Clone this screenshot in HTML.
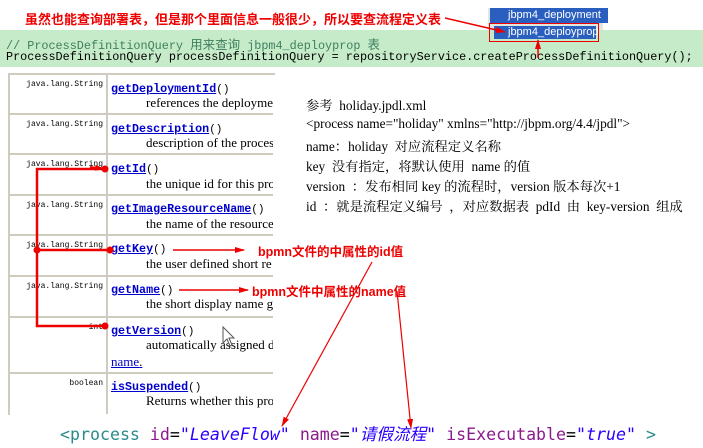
<!DOCTYPE html>
<html><head><meta charset="utf-8"><style>
body{margin:0;width:703px;height:448px;background:#fff;position:relative;overflow:hidden;font-family:"Liberation Serif","Noto Serif CJK SC",serif}
.a{position:absolute;white-space:nowrap}
.mono{font-family:"Liberation Mono","Noto Sans CJK SC",monospace}
.t{font-size:8px;font-family:"Liberation Mono",monospace;color:#000;text-align:right;width:92px}
.m{font-family:"Liberation Mono",monospace;font-weight:bold;font-size:11.7px;color:#00c;text-decoration:underline}
.d{font-size:13px;color:#000}
.r{color:#e00;font-weight:bold;font-family:"Liberation Sans","Noto Sans CJK SC",sans-serif}
.rt{font-size:13.3px;color:#000;font-family:"Liberation Serif","Noto Serif CJK SC",serif}
</style></head><body>
<div class="a" style="left:488px;top:8px;width:115px;height:32px;background:#dfe7e0"></div>
<div class="a" style="left:0;top:30px;width:703px;height:37px;background:#c6ebc9"></div>
<div class="a" style="left:490px;top:8px;width:100px;height:15px;background:#2a5fc0;color:#fff;font:11px 'Liberation Sans',sans-serif;padding-left:18px;line-height:15px">jbpm4_deployment</div>
<div class="a" style="left:494px;top:26px;width:88px;height:13px;background:#2a5fc0;color:#fff;font:11px 'Liberation Sans',sans-serif;padding-left:14px;line-height:13px">jbpm4_deployprop</div>
<div class="a" style="left:489px;top:23px;width:108px;height:17px;border:1px solid #e00"></div>
<div class="a r" style="left:25px;top:9px;font-size:13px">虽然也能查询部署表，但是那个里面信息一般很少，所以要查流程定义表</div>
<div class="a mono" style="left:6px;top:34px;font-size:11.8px;color:#3f7f5f">// ProcessDefinitionQuery <span style="font-family:'Noto Sans CJK SC',sans-serif;font-size:12.5px">用来查询</span> jbpm4_deployprop <span style="font-family:'Noto Sans CJK SC',sans-serif;font-size:12.5px">表</span></div>
<div class="a mono" style="left:6px;top:50px;font-size:11.8px;color:#000">ProcessDefinitionQuery processDefinitionQuery = repositoryService.createProcessDefinitionQuery();</div>

<div class="a" style="left:8px;top:73px;width:265px;height:340px;border-left:2px solid #cfcbbf;border-top:2px solid #cfcbbf"></div>
<div class="a" style="left:106px;top:74px;width:2px;height:340px;background:#cfcbbf"></div>
<div class="a" style="left:10px;top:113px;width:263px;height:2px;background:#cfcbbf"></div>
<div class="a" style="left:10px;top:153px;width:263px;height:2px;background:#cfcbbf"></div>
<div class="a" style="left:10px;top:194px;width:263px;height:2px;background:#cfcbbf"></div>
<div class="a" style="left:10px;top:234px;width:263px;height:2px;background:#cfcbbf"></div>
<div class="a" style="left:10px;top:275px;width:263px;height:2px;background:#cfcbbf"></div>
<div class="a" style="left:10px;top:316px;width:263px;height:2px;background:#cfcbbf"></div>
<div class="a" style="left:10px;top:372px;width:263px;height:2px;background:#cfcbbf"></div>

<div class="a t" style="left:11px;top:80px">java.lang.String</div>
<div class="a t" style="left:11px;top:120px">java.lang.String</div>
<div class="a t" style="left:11px;top:160px">java.lang.String</div>
<div class="a t" style="left:11px;top:201px">java.lang.String</div>
<div class="a t" style="left:11px;top:241px">java.lang.String</div>
<div class="a t" style="left:11px;top:282px">java.lang.String</div>
<div class="a t" style="left:11px;top:323px">int</div>
<div class="a t" style="left:11px;top:379px">boolean</div>

<div style="position:absolute;left:111px;top:74px;width:162px;height:340px;overflow:hidden">
<div class="a" style="left:0;top:5px"><span class="m">getDeploymentId</span><span class="mono" style="font-size:11px">()</span></div>
<div class="a d" style="left:35px;top:21px">references the deployment</div>
<div class="a" style="left:0;top:45px"><span class="m">getDescription</span><span class="mono" style="font-size:11px">()</span></div>
<div class="a d" style="left:35px;top:61px">description of the process</div>
<div class="a" style="left:0;top:85px"><span class="m">getId</span><span class="mono" style="font-size:11px">()</span></div>
<div class="a d" style="left:35px;top:102px">the unique id for this process</div>
<div class="a" style="left:0;top:125px"><span class="m">getImageResourceName</span><span class="mono" style="font-size:11px">()</span></div>
<div class="a d" style="left:35px;top:142px">the name of the resource</div>
<div class="a" style="left:0;top:165px"><span class="m">getKey</span><span class="mono" style="font-size:11px">()</span></div>
<div class="a d" style="left:35px;top:182px">the user defined short re</div>
<div class="a" style="left:0;top:206px"><span class="m">getName</span><span class="mono" style="font-size:11px">()</span></div>
<div class="a d" style="left:35px;top:222px">the short display name g</div>
<div class="a" style="left:0;top:247px"><span class="m">getVersion</span><span class="mono" style="font-size:11px">()</span></div>
<div class="a d" style="left:35px;top:263px">automatically assigned d</div>
<div class="a d" style="left:0;top:280px;color:#00c;text-decoration:underline">name<span style="color:#000;text-decoration:none">.</span></div>
<div class="a" style="left:0;top:303px"><span class="m">isSuspended</span><span class="mono" style="font-size:11px">()</span></div>
<div class="a d" style="left:35px;top:319px">Returns whether this pro</div>
</div>

<div class="a rt" style="left:306px;top:95px">参考 &nbsp;holiday.jpdl.xml</div>
<div class="a rt" style="left:306px;top:116px">&lt;process name="holiday" xmlns="http://jbpm.org/4.4/jpdl"&gt;</div>
<div class="a rt" style="left:306px;top:136px">name：holiday &nbsp;对应流程定义名称</div>
<div class="a rt" style="left:306px;top:156px">key &nbsp;没有指定，将默认使用 &nbsp;name 的值</div>
<div class="a rt" style="left:306px;top:176px">version &nbsp;：发布相同 key 的流程时，version 版本每次+1</div>
<div class="a rt" style="left:306px;top:196px">id &nbsp;：就是流程定义编号 &nbsp;，对应数据表 &nbsp;pdId &nbsp;由 &nbsp;key-version &nbsp;组成</div>

<div class="a r" style="left:258px;top:241px;font-size:12.5px">bpmn文件的中属性的id值</div>
<div class="a r" style="left:252px;top:281px;font-size:12.5px">bpmn文件中属性的name值</div>

<div class="a" style="left:60px;top:421px;font-family:'DejaVu Sans Mono','Noto Sans CJK SC',monospace;font-size:16.6px;color:#2a8a8a">&lt;process <span style="color:#8b1a8b">id</span><span style="color:#000">=</span><span style="color:#2a00ff;font-style:italic">"LeaveFlow"</span> <span style="color:#8b1a8b">name</span><span style="color:#000">=</span><span style="color:#2a00ff;font-style:italic">"请假流程"</span> <span style="color:#8b1a8b">isExecutable</span><span style="color:#000">=</span><span style="color:#2a00ff;font-style:italic">"true"</span> &gt;</div>

<svg class="a" style="left:0;top:0" width="703" height="448">
<defs><marker id="ar" markerWidth="10" markerHeight="6" refX="9" refY="3" orient="auto" markerUnits="userSpaceOnUse"><path d="M0,0 L10,3 L0,6 Z" fill="#e00"/></marker></defs>
<g stroke="#e00" fill="none">
<line x1="445" y1="18" x2="505" y2="32" stroke-width="1.5" marker-end="url(#ar)"/>
<line x1="538" y1="58" x2="538" y2="40" stroke-width="1.5" marker-end="url(#ar)"/>
<polyline points="105,169 37,169 37,326 105,326" stroke-width="2.5"/>
<line x1="37" y1="250" x2="110" y2="250" stroke-width="2.5"/>
<line x1="90" y1="167" x2="104" y2="169" stroke-width="2" marker-end="url(#ar)"/>
<line x1="173" y1="250" x2="244" y2="250" stroke-width="1.5" marker-end="url(#ar)"/>
<line x1="179" y1="290" x2="248" y2="290" stroke-width="1.5" marker-end="url(#ar)"/>
<line x1="372" y1="262" x2="282" y2="426" stroke-width="1.2" marker-end="url(#ar)"/>
<line x1="397" y1="291" x2="411" y2="428" stroke-width="1.2" marker-end="url(#ar)"/>
</g>
<g fill="#e00"><circle cx="105" cy="169" r="3.5"/><circle cx="37" cy="250" r="3.5"/><circle cx="110" cy="250" r="3.5"/><circle cx="105" cy="326" r="3.5"/></g>
<path d="M223,327 L223,343 L227,339 L230,346 L232,345 L229,338 L234,338 Z" fill="#fff" stroke="#555"/>
</svg>
</body></html>
